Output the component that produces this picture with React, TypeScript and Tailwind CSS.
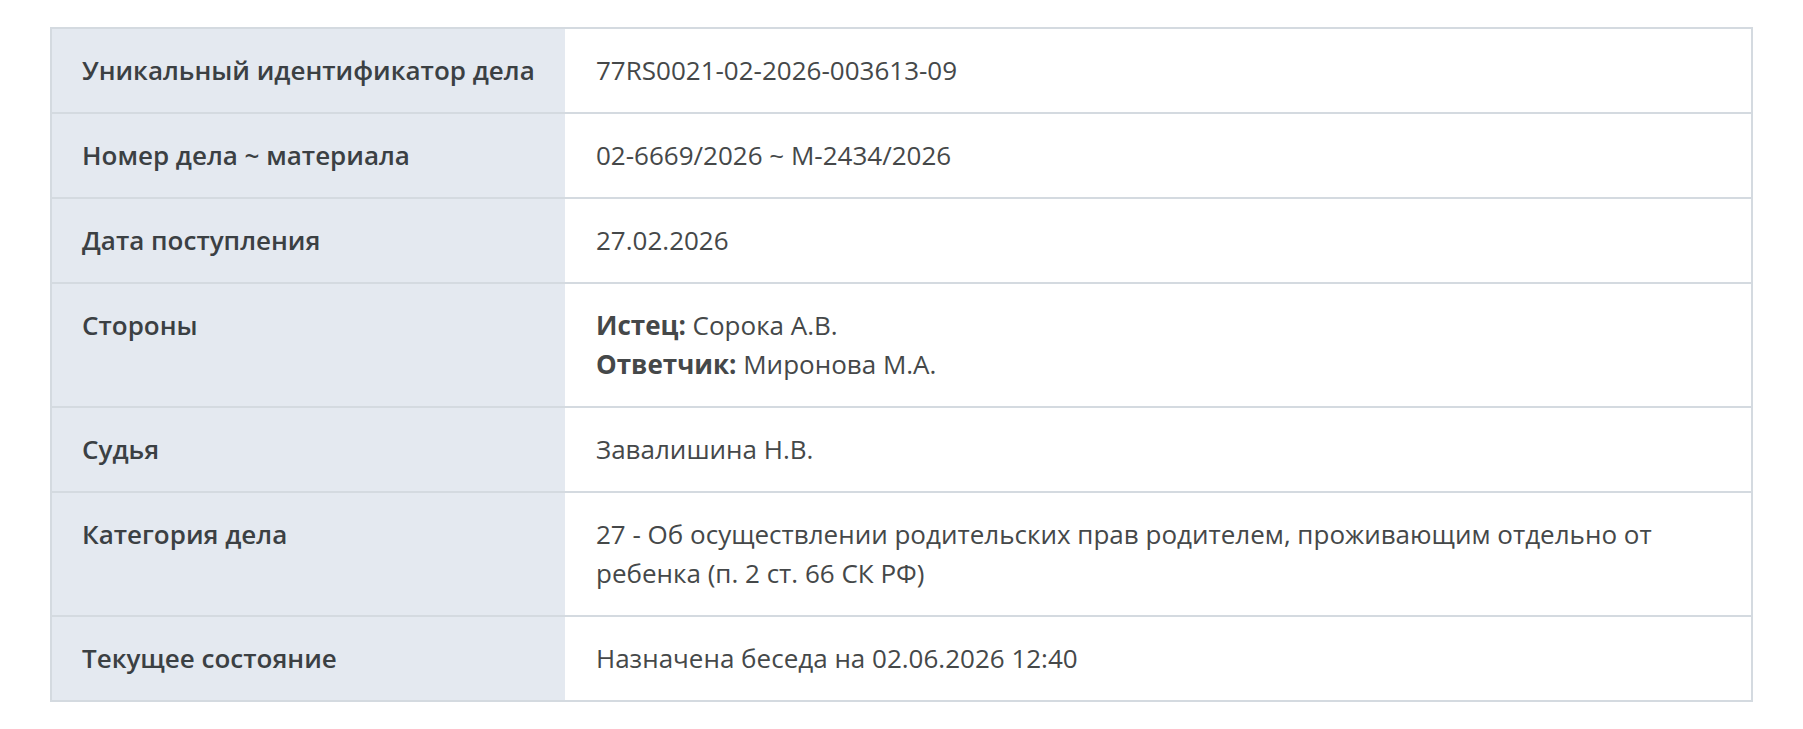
import React from 'react';

type Row = {
  label: string;
  value: React.ReactNode;
};

const rows: Row[] = [
  { label: 'Уникальный идентификатор дела', value: '77RS0021-02-2026-003613-09' },
  { label: 'Номер дела ~ материала', value: '02-6669/2026 ~ М-2434/2026' },
  { label: 'Дата поступления', value: '27.02.2026' },
  {
    label: 'Стороны',
    value: (
      <>
        <div>
          <b className="font-bold">Истец:</b> Сорока А.В.
        </div>
        <div>
          <b className="font-bold">Ответчик:</b> Миронова М.А.
        </div>
      </>
    ),
  },
  { label: 'Судья', value: 'Завалишина Н.В.' },
  {
    label: 'Категория дела',
    value: '27 - Об осуществлении родительских прав родителем, проживающим отдельно от ребенка (п. 2 ст. 66 СК РФ)',
  },
  { label: 'Текущее состояние', value: 'Назначена беседа на 02.06.2026 12:40' },
];

export default function App() {
  return (
    <div className="min-h-screen bg-white px-[50px] pt-[27px] font-['Open_Sans',sans-serif] text-[26px] leading-[39px]">
      <div className="border-2 border-[#d4dae0]">
        {rows.map((row, i) => (
          <div
            key={i}
            className={`grid grid-cols-[513px_1fr] ${i < rows.length - 1 ? 'border-b-2 border-[#d4dae0]' : ''}`}
          >
            <div className="bg-[#e4e9f0] px-[30px] py-[22px] font-semibold text-[#3b4043]">{row.label}</div>
            <div className="px-[31px] py-[22px] text-[#454849]">{row.value}</div>
          </div>
        ))}
      </div>
    </div>
  );
}
